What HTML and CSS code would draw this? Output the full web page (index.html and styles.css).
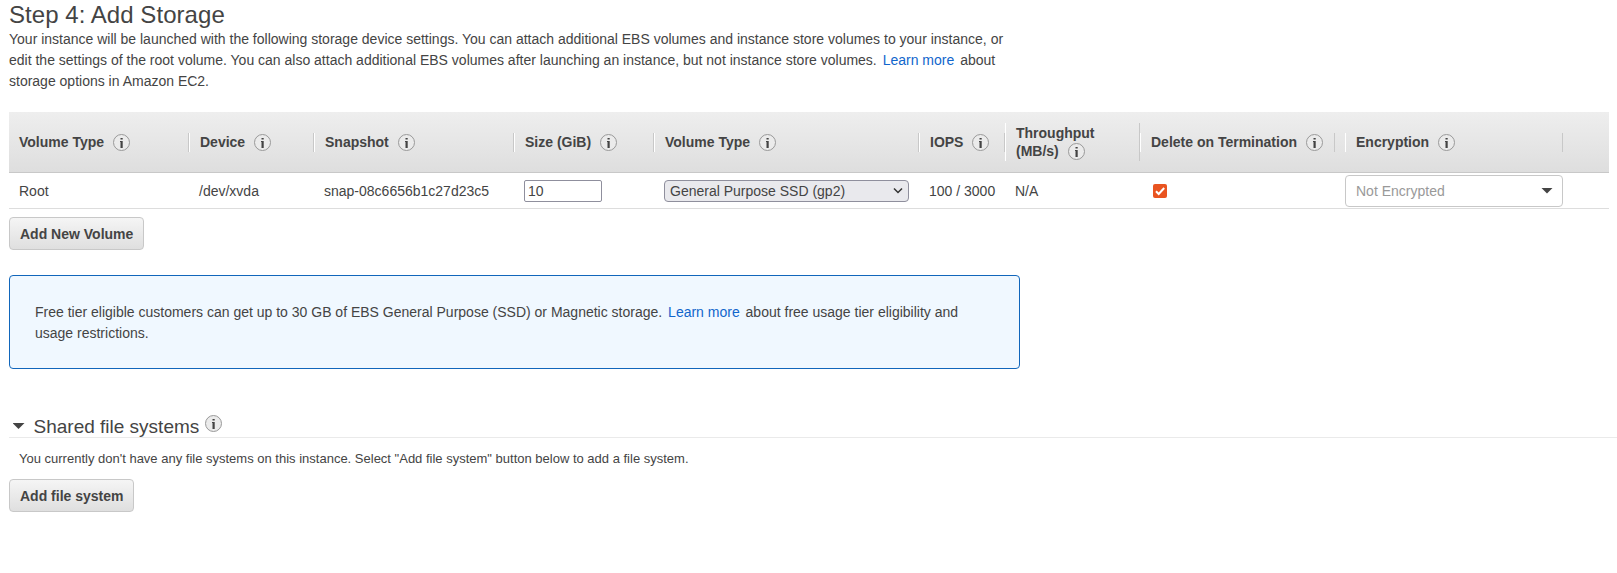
FILE: index.html
```html
<!DOCTYPE html>
<html lang="en">
<head>
<meta charset="utf-8">
<title>Step 4: Add Storage</title>
<link rel="stylesheet" href="styles.css">
</head>
<body>
<svg class="defs" width="0" height="0" aria-hidden="true">
  <symbol id="info" viewBox="0 0 17 17">
    <circle cx="8.5" cy="8.5" r="8" fill="#ebebeb" stroke="#999"/>
    <path d="M7.500 4h2.200v1.600H7.500zM7 7h2.700v7H7.500V8H7z" fill="#444"/>
  </symbol>
</svg>
<main class="page">
  <h1 class="title">Step 4: Add Storage</h1>
  <p class="intro">Your instance will be launched with the following storage device settings. You can attach additional EBS volumes and instance store volumes to your instance, or<br>edit the settings of the root volume. You can also attach additional EBS volumes after launching an instance, but not instance store volumes. <a class="link">Learn more</a> about<br>storage options in Amazon EC2.</p>

  <section class="table">
    <div class="row head">
      <div class="th first">Volume Type<svg class="info"><use href="#info"/></svg></div>
      <div class="th">Device<svg class="info"><use href="#info"/></svg></div>
      <div class="th">Snapshot<svg class="info"><use href="#info"/></svg></div>
      <div class="th">Size (GiB)<svg class="info"><use href="#info"/></svg></div>
      <div class="th">Volume Type<svg class="info"><use href="#info"/></svg></div>
      <div class="th">IOPS<svg class="info"><use href="#info"/></svg></div>
      <div class="th tall"><span>Throughput</span><span class="line">(MB/s)<svg class="info"><use href="#info"/></svg></span></div>
      <div class="th">Delete on Termination<svg class="info"><use href="#info"/></svg></div>
      <div></div>
      <div class="th">Encryption<svg class="info"><use href="#info"/></svg></div>
    </div>
    <div class="row body">
      <div class="td">Root</div>
      <div class="td">/dev/xvda</div>
      <div class="td">snap-08c6656b1c27d23c5</div>
      <div class="td control"><div class="size">10</div></div>
      <div class="td control"><div class="select">General Purpose SSD (gp2)<svg class="chevron" viewBox="0 0 10 7"><path d="M1 1.500l4 4 4-4" fill="none" stroke="#333" stroke-width="1.500"/></svg></div></div>
      <div class="td">100 / 3000</div>
      <div class="td">N/A</div>
      <div class="td control"><svg class="check" viewBox="0 0 14 14"><rect width="14" height="14" rx="2" fill="#e95420"/><path d="M3 7.200l2.700 2.800L11.200 4" fill="none" stroke="#fff" stroke-width="2"/></svg></div>
      <div></div>
      <div class="encryption"><span>Not Encrypted</span><i class="arrow"></i></div>
    </div>
  </section>
  <button class="button add-volume">Add New Volume</button>

  <section class="notice">Free tier eligible customers can get up to 30 GB of EBS General Purpose (SSD) or Magnetic storage. <a class="link">Learn more</a> about free usage tier eligibility and<br>usage restrictions.</section>

  <h2 class="subtitle"><i class="arrow"></i><span>Shared file systems</span><svg class="info"><use href="#info"/></svg></h2>
  <p class="empty">You currently don't have any file systems on this instance. Select "Add file system" button below to add a file system.</p>
  <button class="button">Add file system</button>
</main>
<div class="edge"><div class="edge-panel"></div></div>
</body>
</html>
```
FILE: styles.css
```css
* { box-sizing: border-box; }
body {
  margin: 0;
  height: 573px;
  overflow: hidden;
  position: relative;
  background: #fff;
  color: #444;
  font: 14px/21px "Liberation Sans", Arial, sans-serif;
}
.defs { position: absolute; }
.page { padding-left: 9px; }
.title { margin: 0; font-size: 24px; font-weight: 400; line-height: 28px; height: 29px; padding-top: 1px; letter-spacing: .05px; }
.intro { margin: 0; white-space: nowrap; }
.link { color: #1166cc; margin: 0 2px; }
.info { display: block; width: 17px; height: 17px; flex: none; margin-left: 9px; }
.table { margin: 20px 8px 0 0; }
.row {
  display: grid;
  grid-template-columns: 180px 125px 200px 140px 265px 86px 135px 195px 10px 218px;
  align-items: center;
}
.head {
  height: 61px;
  background: linear-gradient(#eee, #dedede);
  border-bottom: 1px solid #c8c8c8;
  font-weight: 700;
}
.th {
  display: flex;
  align-items: center;
  height: 19px;
  line-height: 19px;
  padding-left: 10px;
  border-left: 1px solid #fff;
  border-right: 1px solid #c8c8c8;
  white-space: nowrap;
}
.first { border-left: 0; }
.tall { height: 38px; padding-top: 1px; flex-direction: column; align-items: flex-start; }
.line { display: flex; align-items: center; height: 17px; }
.body { height: 36px; border-bottom: 1px solid #ddd; }
.td { padding: 2px 0 0 10px; white-space: nowrap; }
.control { padding-top: 0; }
.size { width: 78px; height: 22px; line-height: 20px; padding-left: 3px; border: 1px solid #8f8f9d; border-radius: 2px; }
.select {
  display: flex;
  align-items: center;
  justify-content: space-between;
  width: 245px;
  height: 22px;
  line-height: 20px;
  padding: 0 5px;
  border: 1px solid #8f8f9d;
  border-radius: 4px;
  background: #e9e9ed;
}
.chevron { width: 10px; height: 7px; }
.check { display: block; width: 14px; height: 14px; margin-left: 3px; }
.encryption {
  display: flex;
  align-items: center;
  justify-content: space-between;
  height: 32px;
  padding: 0 9px 0 10px;
  border: 1px solid #c8c8c8;
  border-radius: 4px;
  color: #999;
}
.encryption span { padding-top: 2px; }
.arrow { width: 12px; height: 6px; background: #444; clip-path: polygon(0 0, 100% 0, 50% 100%); }
.button {
  display: block;
  height: 33px;
  padding: 0 10px;
  border: 1px solid #c8c8c8;
  border-radius: 4px;
  background: linear-gradient(#f5f5f5, #dfdfdf);
  color: #444;
  font: 700 14px "Liberation Sans", Arial, sans-serif;
}
.add-volume { margin-top: 8px; }
.notice {
  width: 1011px;
  height: 94px;
  margin-top: 25px;
  padding: 26px 25px;
  border: 1px solid #1166bb;
  border-radius: 4px;
  background: #f0f8ff;
  white-space: nowrap;
}
.subtitle {
  display: flex;
  align-items: center;
  height: 25px;
  margin: 44px 0 0;
  padding-left: 3.5px;
  border-bottom: 1px solid #eaeaea;
  font-size: 19px;
  font-weight: 400;
}
.subtitle .arrow { margin-top: 2px; }
.subtitle span { margin-left: 9px; padding-top: 3px; }
.subtitle .info { margin: 0 0 4px 5.500px; }
.empty { margin: 11px 0 10px 10px; font-size: 13px; line-height: 20px; }
/* Soft shadow of a panel parked beyond the right edge. */
.edge {
  position: absolute;
  right: 0;
  top: 150px;
  width: 16px;
  height: 236px;
  overflow: hidden;
}
.edge-panel {
  height: 188px;
  margin: 24px 0 0 15px;
  box-shadow: 0 0 18px rgba(0, 0, 0, .07);
}
```
